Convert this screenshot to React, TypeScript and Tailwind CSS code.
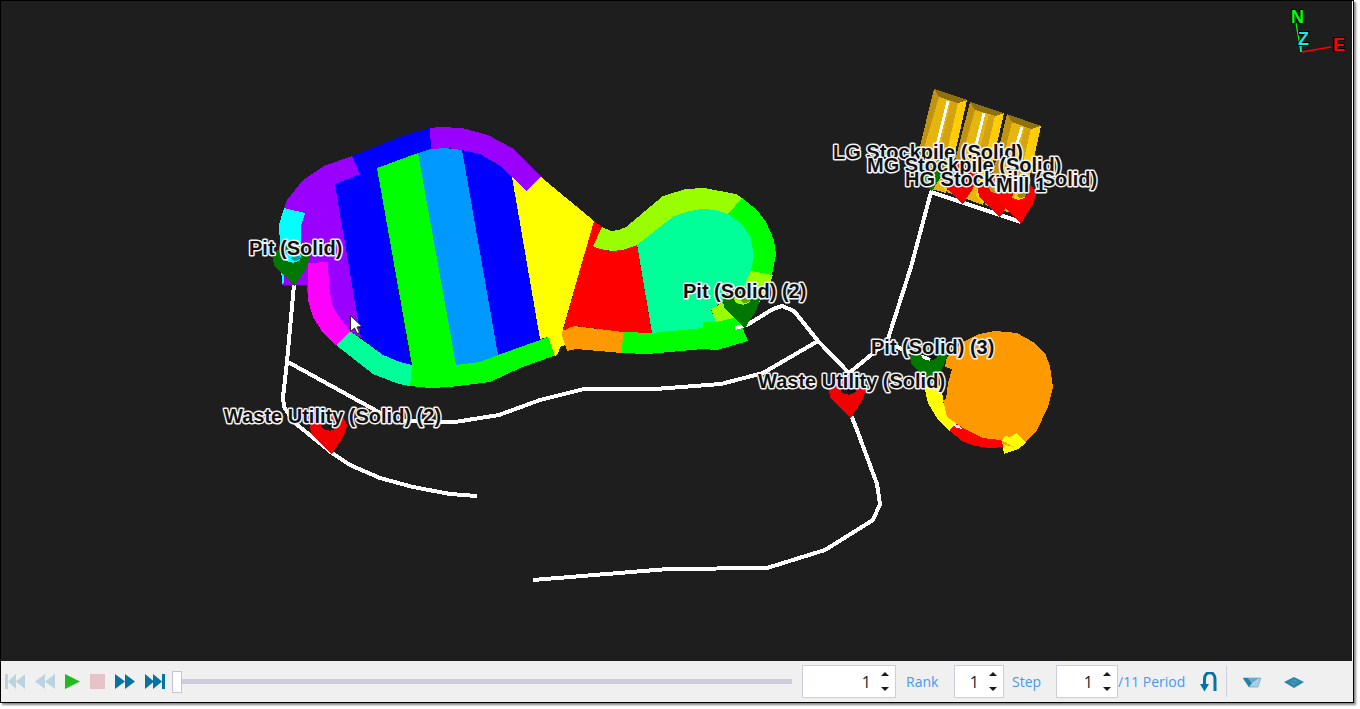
import React, { useState } from "react";

type Shape = { fill: string; points: string };

// Mined blocks, painted from back to front
const blocks: Shape[] = [
  { fill: "#9900ff", points: "352,156 324,166 303,180 287,200 284,208 282,225 282,285 307,285 308,300 336,345 350,331 361,338 335,184 360,174" },
  { fill: "#ff00ff", points: "308,263 328,262 329,287 333,307 340,318 350,331 336,345 323,333 313,317 308,300" },
  { fill: "#00ffff", points: "284,208 305,213 301,226 301,262 282,285 280,245 279,225" },
  { fill: "#9900ff", points: "284,266 307,262 307,285 284,285" },
  { fill: "#0000ff", points: "335,184 360,174 352,156 402,136 430,128 431,149 377,168 411,365 400,363 383,355 361,338" },
  { fill: "#00ff99", points: "350,331 383,355 400,362 412,365 410,386 399,384 373,374 336,345" },
  { fill: "#00ff00", points: "377,168 418,153 456,365 480,362 519,347 548,337 556,355 520,368 490,382 450,387 430,388 410,386 412,365" },
  { fill: "#0099ff", points: "418,153 430,149 445,148 462,150 498,355 480,362 456,365" },
  { fill: "#0000ff", points: "462,150 480,154 500,166 512,178 540,340 498,355" },
  { fill: "#9900ff", points: "430,128 440,127 462,128 488,135 512,148 541,177 526,191 512,177 499,165 480,154 462,150 447,148 431,149" },
  { fill: "#ffff00", points: "512,177 526,191 541,177 594,221 563,329 562,335 565,345 560,347 558,354 555,356 548,337 540,339" },
  { fill: "#ff0000", points: "594,221 602,227 593,246 610,251 637,245 652,334 623,332 575,326 563,330" },
  { fill: "#ff9900", points: "562,331 574,326 623,332 622,353 576,349 567,351 562,335" },
  { fill: "#00ff99", points: "637,244 674,214 702,206 728,212 744,224 752,236 756,255 753,271 745,285 711,310 716,322 703,329 652,333" },
  { fill: "#99ff00", points: "602,227 611,231 619,230 626,227 663,196 686,189 704,188 736,194 742,198 728,214 715,210 702,209 690,211 674,216 637,245 622,250 612,251 600,249 593,246" },
  { fill: "#00ff00", points: "742,198 757,210 766,222 774,240 776,255 772,275 751,271 754,255 750,236 742,224 728,214" },
  { fill: "#99ff00", points: "751,271 773,275 768,290 757,305 740,318 716,322 711,309 728,300 742,290" },
  { fill: "#00ff00", points: "623,332 652,333 703,328 703,322 716,322 738,317 748,341 717,350 703,349 647,354 622,353" },
  { fill: "#ffff00", points: "927,377 942,388 943,402 950,417 958,422 949,431 937,418 928,403 925,390" },
  { fill: "#ff0000", points: "949,430 957,422 980,434 1004,439 1003,447 990,448 975,446 962,441" },
  { fill: "#ff9900", points: "947,357 963,342 979,334 995,331 1017,333 1033,342 1045,353 1050,366 1053,387 1048,407 1037,430 1025,442 1000,440 983,438 963,428 947,417 943,400 946,399 948,383 952,369 945,367" },
  { fill: "#ffff00", points: "1002,441 1005,436 1010,437 1017,433 1026,443 1018,449 1004,454" },
  { fill: "#ff9900", points: "1001,440 1014,447 1003,444" },
  { fill: "#ffffff", points: "953,424 958,425 963,429 956,428" },
];

const stockpiles: Shape[] = [
  { fill: "#e6b510", points: "934,89 967,100 946,193 928,188 919,150" },
  { fill: "#bf9210", points: "934,89 939,97 924,148 919,150" },
  { fill: "#8f7010", points: "934,89 967,100 958,103 939,97" },
  { fill: "#ffcc08", points: "967,100 958,103 941,180 946,193" },
  { fill: "#d3a410", points: "951,101 958,103 942,172 936,165" },
  { fill: "#e6b510", points: "970,102 1004,113 983,205 947,192" },
  { fill: "#bf9210", points: "970,102 975,110 954,185 947,192" },
  { fill: "#8f7010", points: "970,102 1004,113 995,116 975,110" },
  { fill: "#ffcc08", points: "1004,113 995,116 976,195 983,205" },
  { fill: "#d3a410", points: "989,114 995,116 979,184 972,178" },
  { fill: "#e6b510", points: "1007,114 1041,126 1021,216 985,205" },
  { fill: "#bf9210", points: "1007,114 1012,122 994,196 985,205" },
  { fill: "#8f7010", points: "1007,114 1041,126 1031,129 1012,122" },
  { fill: "#ffcc08", points: "1041,126 1031,129 1012,208 1021,216" },
  { fill: "#d3a410", points: "1025,127 1031,129 1015,196 1009,190" },
];

const roads = [
  "294,285 287,362 283,397 284,407 295,423 332,453 350,465 380,478 413,487 450,494 477,496",
  "288,362 375,410 395,421 455,422 499,415 540,400 584,389 655,389 721,384 763,373 818,341",
  "735,328 747,325 773,309 782,306 794,311 818,341 849,373 887,342 911,267 931,192 1021,222",
  "887,342 902,349 930,360",
  "851,415 857,430 877,484 880,504 873,520 825,550 767,568 668,569 533,580",
  "948,101 937,145",
  "984,113 976,145",
  "1022,127 1017,143",
];

const pins = [
  { x: 295, y: 286, color: "#007800" },
  { x: 745, y: 328, color: "#007800" },
  { x: 932, y: 384, color: "#007800" },
  { x: 332, y: 454, color: "#f00000" },
  { x: 851, y: 418, color: "#f00000" },
  { x: 932, y: 191, color: "#007800" },
  { x: 963, y: 204, color: "#f00000" },
  { x: 1000, y: 217, color: "#f00000" },
  { x: 1021, y: 223, color: "#ff0000" },
];

const labels = [
  { x: 249, y: 255, text: "Pit (Solid)" },
  { x: 683, y: 298, text: "Pit (Solid) (2)" },
  { x: 871, y: 354, text: "Pit (Solid) (3)" },
  { x: 758, y: 388, text: "Waste Utility (Solid)" },
  { x: 224, y: 423, text: "Waste Utility (Solid) (2)" },
  { x: 833, y: 159, text: "LG Stockpile (Solid)" },
  { x: 867, y: 172, text: "MG Stockpile (Solid)" },
  { x: 905, y: 186, text: "HG Stockpile (Solid)" },
  { x: 996, y: 192, text: "Mill 1" },
];

const Pin = ({ x, y, color }: { x: number; y: number; color: string }) => (
  <g transform={`translate(${x} ${y})`}>
    <path
      fill={color}
      fillRule="evenodd"
      d="M0 0 L-21 -20 L-22 -28 C-19 -38 -11 -41 -2 -41 C8 -41 14 -36 15 -28 L12 -19 Z M-11 -29 C-10 -22 4 -21 6 -29 C5 -36 -9 -36 -11 -29 Z"
    />
    <path fill="#000" fillOpacity="0.35" d="M-4 -27 C-2 -31 4 -31 6 -29 C4 -24 -2 -24 -4 -27 Z" />
  </g>
);

const Scene = () => (
  <svg
    viewBox="1 1 1351 660"
    className="block h-full w-full"
    fontFamily="'Liberation Sans', Arial, sans-serif"
  >
    <g shapeRendering="crispEdges">
      {blocks.map((block) => (
        <polygon key={block.points} points={block.points} fill={block.fill} />
      ))}
      {stockpiles.map((face) => (
        <polygon key={face.points} points={face.points} fill={face.fill} />
      ))}
      {roads.map((points) => (
        <polyline
          key={points}
          points={points}
          fill="none"
          stroke="#fff"
          strokeWidth={points.split(" ").length > 2 ? 4 : 3}
          strokeLinejoin="round"
        />
      ))}
      {pins.map((pin) => (
        <Pin key={`${pin.x}-${pin.y}`} {...pin} />
      ))}
    </g>

    {labels.map(({ x, y, text }) => (
      <text
        key={text}
        x={x}
        y={y}
        fontSize="20"
        fontWeight="700"
        fill="#111"
        stroke="#f4f4f4"
        strokeWidth="3"
        strokeLinejoin="round"
        paintOrder="stroke"
      >
        {text}
      </text>
    ))}

    {/* Axis compass */}
    <g fill="none" strokeWidth="1.3">
      <path d="M1296 23 L1301 52" stroke="#00ff00" />
      <path d="M1302 52 L1331 47" stroke="#ff0000" />
      <path d="M1301 45 V52" stroke="#22e6e6" />
    </g>
    <g fontSize="18" fontWeight="700" stroke="#000" strokeWidth="2" paintOrder="stroke">
      <text x="1291" y="23" fill="#00ff00">N</text>
      <text x="1298" y="45" fill="#22e6e6">Z</text>
      <text x="1333" y="51" fill="#ff0000">E</text>
    </g>

    {/* Mouse pointer */}
    <path
      d="M350.500 315.500 V331.500 L354.500 328 L357 333.500 L359.500 332.500 L357 327 L362 326.500 Z"
      fill="#fff"
      stroke="#222"
    />
  </svg>
);

type IconButtonProps = {
  label: string;
  className: string;
  viewBox: string;
  disabled?: boolean;
  onClick?: () => void;
  children: React.ReactNode;
};

const IconButton = ({ label, className, viewBox, disabled, onClick, children }: IconButtonProps) => (
  <button
    type="button"
    aria-label={label}
    disabled={disabled}
    onClick={onClick}
    className={`h-5 shrink-0 ${className}`}
  >
    <svg viewBox={viewBox} className="block h-full w-full">
      {children}
    </svg>
  </button>
);

type SpinBoxProps = {
  id: string;
  className: string;
  value: number;
  onChange: (value: number) => void;
};

const SpinBox = ({ id, className, value, onChange }: SpinBoxProps) => (
  <div className={`flex h-[33px] shrink-0 border border-[#ccccdd] bg-white ${className}`}>
    <input
      id={id}
      type="text"
      inputMode="numeric"
      value={value}
      onChange={(e) => onChange(Number(e.target.value) || 1)}
      className="min-w-0 flex-1 bg-transparent text-right text-base text-[#222] outline-none"
    />
    <div className="flex w-6 shrink-0 flex-col items-center justify-between py-1 pl-2 pr-1">
      <button type="button" aria-label="Increase" onClick={() => onChange(value + 1)} className="py-0.5">
        <svg viewBox="0 0 8 4" className="block h-1 w-2">
          <path d="M0 4 L4 0 L8 4 Z" fill="#1a1a1a" />
        </svg>
      </button>
      <button
        type="button"
        aria-label="Decrease"
        onClick={() => onChange(Math.max(1, value - 1))}
        className="py-0.5"
      >
        <svg viewBox="0 0 8 4" className="block h-1 w-2">
          <path d="M0 0 L4 4 L8 0 Z" fill="#1a1a1a" />
        </svg>
      </button>
    </div>
  </div>
);

const PlaybackBar = () => {
  const [position, setPosition] = useState(0);
  const [rank, setRank] = useState(1);
  const [step, setStep] = useState(1);
  const [period, setPeriod] = useState(1);

  return (
    <div className="flex h-[41px] shrink-0 items-center bg-[#f0f0f0] pl-1 pr-[49px] font-['Open_Sans','Noto_Sans',sans-serif] text-sm text-[#4499f5]">
      <div className="flex shrink-0 items-center gap-2.5">
        <IconButton label="First" className="w-5" viewBox="0 0 20 20" disabled>
          <path d="M0 2h3v15H0Z M11 2v15L3 9.500Z M20 2v15L11 9.500Z" fill="#bad4df" />
        </IconButton>
        <IconButton label="Rewind" className="w-5" viewBox="0 0 20 20" disabled>
          <path d="M10 2v15L0 9.500Z M20 2v15L10 9.500Z" fill="#bad4df" />
        </IconButton>
        <IconButton label="Play" className="w-[15px]" viewBox="0 0 15 20">
          <path d="M0 2 L15 9.500 L0 17 Z" fill="#22bb22" />
        </IconButton>
        <IconButton label="Stop" className="w-[15px]" viewBox="0 0 15 20" disabled>
          <path d="M0 2h15v15H0Z" fill="#e5c3c6" />
        </IconButton>
        <IconButton label="Fast forward" className="w-5" viewBox="0 0 20 20">
          <path d="M0 2v15L10 9.500Z M10 2v15L20 9.500Z" fill="#0872a3" />
        </IconButton>
        <IconButton label="Last" className="w-5" viewBox="0 0 20 20">
          <path d="M0 2v15L9 9.500Z M8 2v15L17 9.500Z M17 2h3v15h-3Z" fill="#0872a3" />
        </IconButton>
      </div>

      <input
        type="range"
        aria-label="Playback position"
        min={0}
        max={100}
        value={position}
        onChange={(e) => setPosition(Number(e.target.value))}
        className="ml-[7px] mr-2.5 h-6 min-w-0 flex-1 appearance-none bg-transparent [&::-webkit-slider-runnable-track]:h-[5px] [&::-webkit-slider-runnable-track]:bg-[#ccccdd] [&::-webkit-slider-thumb]:-mt-2 [&::-webkit-slider-thumb]:h-[22px] [&::-webkit-slider-thumb]:w-2.5 [&::-webkit-slider-thumb]:appearance-none [&::-webkit-slider-thumb]:border [&::-webkit-slider-thumb]:border-[#c3c3d8] [&::-webkit-slider-thumb]:bg-white"
      />

      <SpinBox id="rank" className="w-[94px]" value={rank} onChange={setRank} />
      <label htmlFor="rank" className="w-[58px] shrink-0 pl-2.5">Rank</label>
      <SpinBox id="step" className="w-[50px]" value={step} onChange={setStep} />
      <label htmlFor="step" className="w-[52px] shrink-0 pl-2">Step</label>
      <SpinBox id="period" className="w-[62px]" value={period} onChange={setPeriod} />
      <label htmlFor="period" className="w-[82px] shrink-0 whitespace-nowrap">/11 Period</label>

      <IconButton label="Reset" className="w-[18px]" viewBox="0 0 18 20" onClick={() => setPeriod(1)}>
        <path d="M4.500 14 V7 C4.500 -1.500 15 -1.500 15 7 V19" fill="none" stroke="#0872a3" strokeWidth="3" />
        <path d="M0 12 H9 L4.500 19.500 Z" fill="#0872a3" />
      </IconButton>
      <div className="ml-2 h-[31px] w-px shrink-0 bg-[#cfcfdd]" />
      <IconButton label="Show pit" className="ml-4 w-5" viewBox="0 0 20 20">
        <path d="M0 6 H18 L15 15 H6 Z" fill="#a9cfe0" stroke="#6ba9c4" strokeWidth="0.700" />
        <path d="M0 6 H5 L9 11 L6 15 Z" fill="#287fa8" />
        <path d="M5 6 H16 L9 11 Z" fill="#6aaac8" />
      </IconButton>
      <IconButton label="Show layer" className="ml-[21px] w-5" viewBox="0 0 20 20">
        <path d="M0 10 L10 5 L20 10 L10 16 Z" fill="#2c84ab" />
        <path d="M5 10 L10 7 L15 10 L10 13 Z" fill="#4f9fc0" />
        <path d="M6 10 H14 M9 8 L11 12" stroke="#2277a0" strokeWidth="0.800" />
      </IconButton>
    </div>
  );
};

const App = () => (
  <div className="h-screen w-full bg-white pb-1.5 pr-1.5">
    <div className="flex h-full flex-col border border-black shadow-[2px_2px_2px_#888888]">
      <main className="min-h-0 flex-1 border-r border-white bg-[#1e1e1e]">
        <Scene />
      </main>
      <PlaybackBar />
    </div>
  </div>
);

export default App;
